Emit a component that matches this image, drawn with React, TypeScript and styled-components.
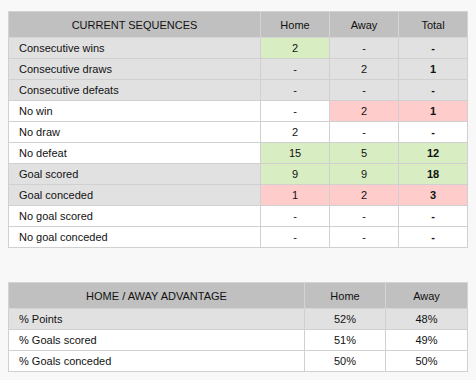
import { createGlobalStyle, styled } from "styled-components";

const GlobalStyle = createGlobalStyle`
  body {
    margin: 0;
    background: #f8f8f8;
    font-family: Tahoma, "Liberation Sans", Arial, sans-serif;
    font-size: 11px;
    color: #111;
  }
`;

const Page = styled.div`
  padding: 11px 9px 0 8px;
  display: flex;
  flex-direction: column;
  gap: 34px;
`;

const Table = styled.table`
  width: 459px;
  border-collapse: collapse;
  border: 1px solid #cfcfcf;
  table-layout: fixed;
`;

const Head = styled.th`
  background: #c0c0c0;
  font-weight: normal;
  height: 25px;
  padding: 0;
  border: 1px solid #d4d4d4;
  text-align: center;
`;

type Tone = "gray" | "white" | "green" | "red";

const tones: Record<Tone, string> = {
  gray: "#e1e1e1",
  white: "#ffffff",
  green: "#d9edc3",
  red: "#ffcccc",
};

const Label = styled.td<{ $tone: Tone }>`
  background: ${(p) => tones[p.$tone]};
  height: 20px;
  padding: 0 0 0 10px;
  border: 1px solid #d0d0d0;
`;

const Cell = styled.td<{ $tone: Tone; $bold?: boolean }>`
  background: ${(p) => tones[p.$tone]};
  height: 20px;
  padding: 0;
  text-align: center;
  border: 1px solid #d0d0d0;
  font-weight: ${(p) => (p.$bold ? "bold" : "normal")};
`;

type Row = { label: string; tone: Tone; cells: [string, Tone][] };

const sequences: Row[] = [
  { label: "Consecutive wins", tone: "gray", cells: [["2", "green"], ["-", "gray"], ["-", "gray"]] },
  { label: "Consecutive draws", tone: "gray", cells: [["-", "gray"], ["2", "gray"], ["1", "gray"]] },
  { label: "Consecutive defeats", tone: "gray", cells: [["-", "gray"], ["-", "gray"], ["-", "gray"]] },
  { label: "No win", tone: "white", cells: [["-", "white"], ["2", "red"], ["1", "red"]] },
  { label: "No draw", tone: "white", cells: [["2", "white"], ["-", "white"], ["-", "white"]] },
  { label: "No defeat", tone: "white", cells: [["15", "green"], ["5", "green"], ["12", "green"]] },
  { label: "Goal scored", tone: "gray", cells: [["9", "green"], ["9", "green"], ["18", "green"]] },
  { label: "Goal conceded", tone: "gray", cells: [["1", "red"], ["2", "red"], ["3", "red"]] },
  { label: "No goal scored", tone: "white", cells: [["-", "white"], ["-", "white"], ["-", "white"]] },
  { label: "No goal conceded", tone: "white", cells: [["-", "white"], ["-", "white"], ["-", "white"]] },
];

const advantage: Row[] = [
  { label: "% Points", tone: "gray", cells: [["52%", "gray"], ["48%", "gray"]] },
  { label: "% Goals scored", tone: "white", cells: [["51%", "white"], ["49%", "white"]] },
  { label: "% Goals conceded", tone: "white", cells: [["50%", "white"], ["50%", "white"]] },
];

const App = () => {
  return (
    <Page>
      <GlobalStyle />
      <Table>
        <colgroup>
          <col style={{ width: 252 }} />
          <col style={{ width: 69 }} />
          <col style={{ width: 69 }} />
          <col style={{ width: 69 }} />
        </colgroup>
        <thead>
          <tr>
            <Head>CURRENT SEQUENCES</Head>
            <Head>Home</Head>
            <Head>Away</Head>
            <Head>Total</Head>
          </tr>
        </thead>
        <tbody>
          {sequences.map((r) => (
            <tr key={r.label}>
              <Label $tone={r.tone}>{r.label}</Label>
              {r.cells.map(([v, t], i) => (
                <Cell key={i} $tone={t} $bold={i === 2}>
                  {v}
                </Cell>
              ))}
            </tr>
          ))}
        </tbody>
      </Table>
      <Table>
        <colgroup>
          <col style={{ width: 296 }} />
          <col style={{ width: 81 }} />
          <col style={{ width: 82 }} />
        </colgroup>
        <thead>
          <tr>
            <Head>HOME / AWAY ADVANTAGE</Head>
            <Head>Home</Head>
            <Head>Away</Head>
          </tr>
        </thead>
        <tbody>
          {advantage.map((r) => (
            <tr key={r.label}>
              <Label $tone={r.tone}>{r.label}</Label>
              {r.cells.map(([v, t], i) => (
                <Cell key={i} $tone={t}>
                  {v}
                </Cell>
              ))}
            </tr>
          ))}
        </tbody>
      </Table>
    </Page>
  );
};

export default App;
